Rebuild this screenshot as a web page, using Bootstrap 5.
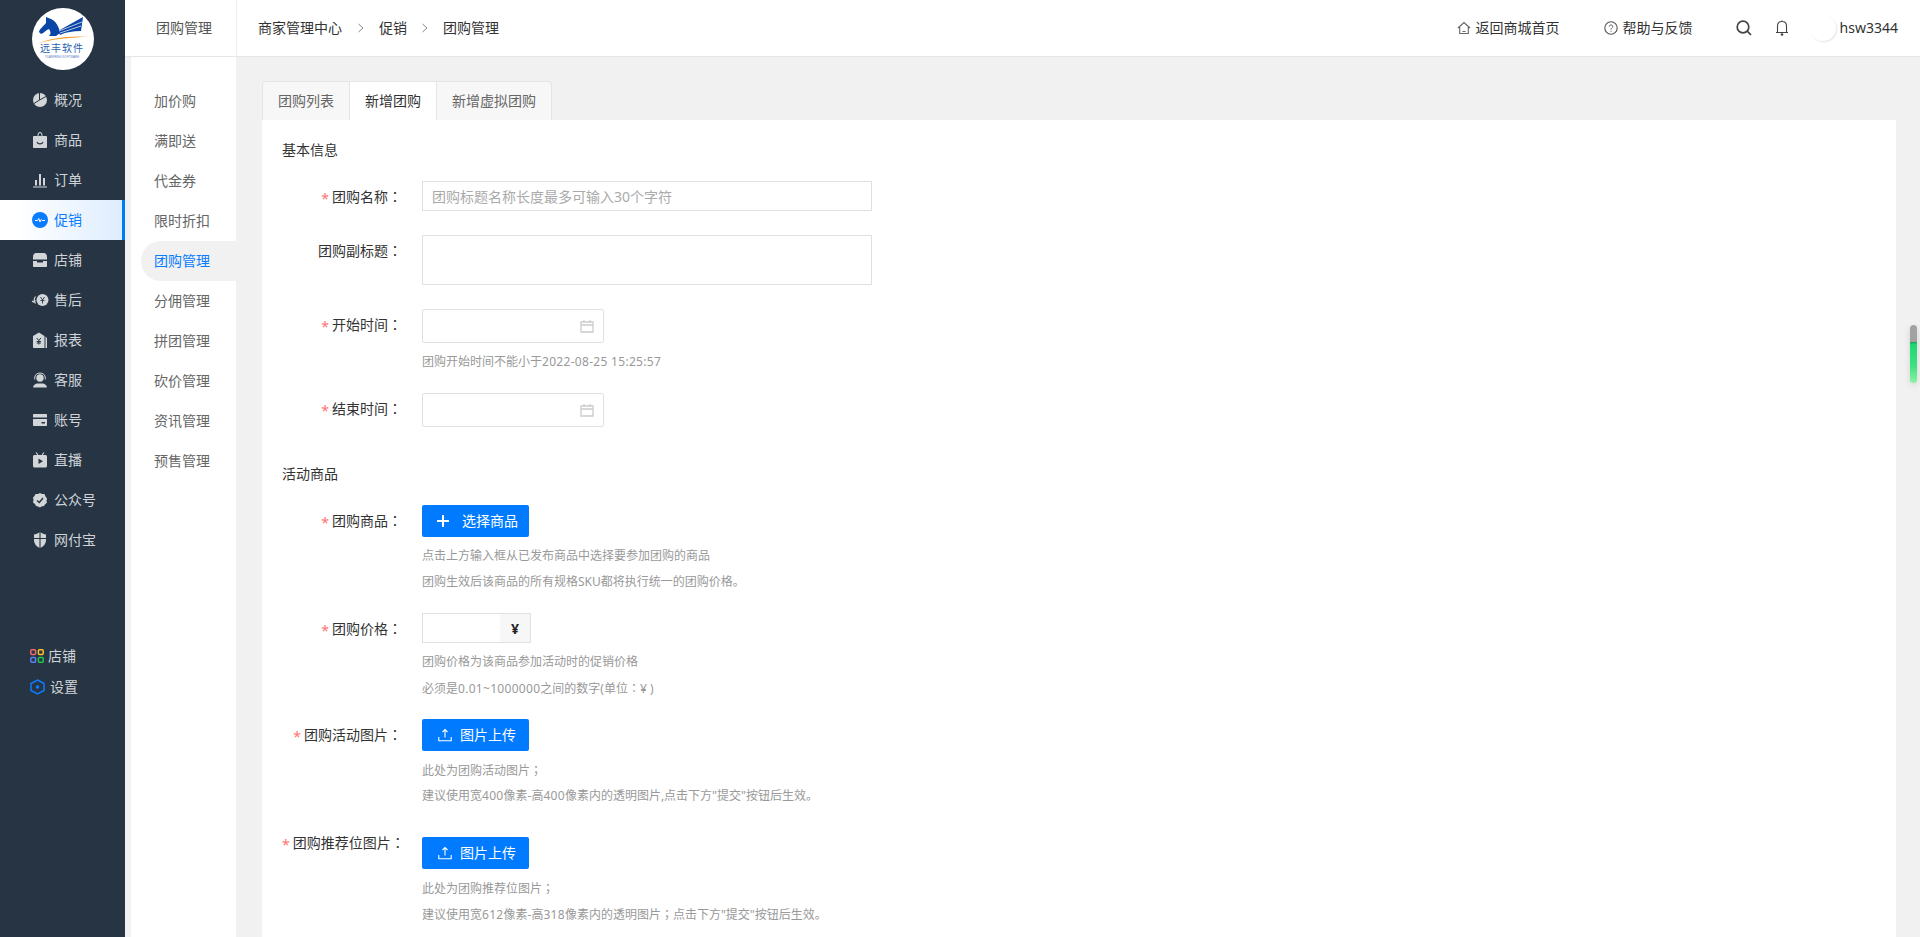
<!DOCTYPE html>
<html lang="zh-CN">
<head>
<meta charset="utf-8">
<title>团购管理</title>
<link rel="stylesheet" href="https://cdn.jsdelivr.net/npm/bootstrap@5.3.0/dist/css/bootstrap.min.css">
<style>
html,body{height:100%;overflow:hidden}
body{font-family:"Noto Sans","Noto Sans CJK SC",sans-serif;font-size:14px;color:#333;background:#f1f1f1;line-height:20px}
.shell{height:937px}
.side{width:125px;background:#263443;color:#cfd3d8;flex:none}
.logo-wrap{height:80px;padding:8px 0 0 32px}
.side-item{height:40px;padding-left:33px;gap:7px;color:#cfd3d8;text-decoration:none}
.side-item svg{width:14px;height:16px;flex:none;overflow:visible}
.side-item.on{background:linear-gradient(90deg,#fff 0,#fff 15%,#deedff 100%);border-right:3px solid #007bff;color:#0a7cff}
.side-item.on svg{width:16px;height:16px;margin-left:-1px;margin-right:-1px}
.side-bottom{margin-top:80px;padding-left:30px}
.side-foot{height:31px;gap:4px;color:#cfd3d8;text-decoration:none}
.side-foot svg{width:14px;height:14px;flex:none}
.side-foot.second svg{width:15px;height:16px}
.side-foot.second{gap:5px}
.right-area{min-width:0}
.topbar{height:57px;background:#fff;border-bottom:1px solid #e6e6e6}
.top-title{width:112px;border-right:1px solid #eee;padding-left:31px;line-height:56px;color:#555;flex:none}
.crumbs{padding-left:21px;color:#333}
.crumb-sep{width:10px;height:10px;margin:0 13px 0 14px;flex:none}
.crumb-sep.b{margin:0 13px 0 13px}
.top-link{color:#333;text-decoration:none;gap:5px}
.link-home{margin-right:44px}
.link-help{margin-right:43px}
.ic-search{margin-right:23px}
.ic-bell{margin-right:21px}
.avatar-dot{width:26px;height:26px;border-radius:50%;background:#fff;box-shadow:1px 1px 2px rgba(0,0,0,.1);margin-right:4px}
.user-name{padding-right:22px}
.body-row{height:880px}
.sub-gap{width:6px;flex:none}
.subnav{width:105px;background:#fff;padding-top:24px;flex:none}
.sub-item{height:40px;line-height:40px;padding-left:23px;margin-left:0;color:#666;text-decoration:none;display:block}
.sub-item.on{margin-left:10px;padding-left:13px;background:#f1f1f1;border-radius:20px 0 0 20px;color:#0a7cff}
.workspace{padding:24px 24px 0 26px;min-width:0}
.tabbar{border:0;height:39px;width:290px}
.tabbar .tab-cell{height:39px;line-height:38px;text-align:center;background:#f7f7f7;color:#666;border:1px solid #e5e5e5;border-bottom:0;border-left:0;margin:0;padding:0;border-radius:0;display:block;text-decoration:none}
.tabbar li:first-child .tab-cell{border-left:1px solid #e5e5e5;border-top-left-radius:4px}
.tabbar li:last-child .tab-cell{border-top-right-radius:4px}
.tabbar .tab-cell.active{background:#fff;color:#333}
.t1{width:88px}.t2{width:87px}.t3{width:115px}
.sheet{background:#fff;padding:20px 0 0 20px;height:818px;border:0}
.sect-title{color:#333;height:20px;line-height:20px}
.frow{display:flex}
.flabel{width:120px;height:30px;margin-right:20px;text-align:right;line-height:30px;flex:none;white-space:nowrap}
.req{color:#ff7373;margin-right:3px;vertical-align:-2px}
.fw-punct{font-family:"Noto Sans CJK TC",sans-serif}
.dg{letter-spacing:.3px}
.form-control.fld{border:1px solid #e0e0e0;border-radius:0;box-shadow:none;font-size:14px;color:#333;padding:0 9px;height:30px;line-height:28px;background:#fff}
.form-control.fld::placeholder{color:#aaa}
.w-name{width:450px}
.area{width:450px;height:50px!important;resize:none}
.datebox{width:182px;height:34px;border:1px solid #e0e0e0;border-radius:2px;background:#fff;padding-right:9px}
.datebox svg{width:14px;height:14px}
.hint{font-size:12px;height:26px;line-height:26px;color:#999;white-space:nowrap}
.hints-tight{margin-top:6px}
.pbtn{background:#007bff;border:0;border-radius:2px;height:32px;color:#fff;font-size:14px;padding:0;line-height:32px;gap:0}
.pbtn:hover{background:#007bff;color:#fff}
.btn-pick{width:107px;padding-left:15px}
.btn-pick svg{width:12px;height:12px;margin-right:13px}
.btn-up{width:107px;padding-left:16px}
.btn-up svg{width:14px;height:14px;margin-right:8px}
.price-group{width:110px;height:30px;flex-wrap:nowrap}
.price-group .fld{width:78px;flex:none;border-right:0;border-radius:0}
.price-group .yen{width:32px;justify-content:center;background:#f7f7f7;border:1px solid #e0e0e0;border-radius:0;padding:0;font-weight:700;color:#222;font-size:14px}
.mt-r1{margin-top:21px}
.mt-r2{margin-top:24px}
.mt-r3{margin-top:24px}
.mt-r4{margin-top:18px}
.mt-s2{margin-top:37px}
.mt-r5{margin-top:21px}
.mt-r6{margin-top:18px}
.mt-r7{margin-top:18px}
.mt-r8{margin-top:28px}
.lab-34{line-height:30px}
.lab-32{line-height:30px}
.lab-last{line-height:10px}
.hint-first{margin-top:6px}
.scroll-mark{position:fixed;left:1910px;top:325px;width:7px;height:58px;border-radius:4px;background:linear-gradient(#a2a2a2 0,#a2a2a2 29%,#1f9e5a 29%,#1fd873 34%,#3fe07f 70%,#8af3a3 100%);box-shadow:0 2px 6px rgba(0,0,0,.12)}
</style>
</head>
<body>
<div class="d-flex shell">
  <aside class="side d-flex flex-column">
    <div class="logo-wrap">
      <svg width="62" height="62" viewBox="0 0 62 62">
        <circle cx="31" cy="31" r="31" fill="#fff"/>
        <path fill="#0b45a8" d="M7 24C8 20 12 18 14 15L14 9L19 11C24 13 27 19 28 25L24 28L17 28C19 26 19 24 17 21C14 22 12 25 9 26Z"/>
        <path fill="#0b45a8" d="M26 23L51 9L49 23C41 23 34 24 28 27Z"/>
        <path stroke="#fff" stroke-width=".7" fill="none" d="M27 23L50 14M28 25L49 18"/>
        <path fill="#f39a1e" d="M4 36C18 30 40 27 57 29C40 29 20 31 4 36Z"/>
        <text x="30" y="44" text-anchor="middle" font-size="10" letter-spacing="1" fill="#2a5fb0" font-family="Noto Sans CJK SC, sans-serif">远丰软件</text>
        <text x="30" y="49.500" text-anchor="middle" font-size="3" fill="#5b82c2" font-family="Liberation Sans, sans-serif">YUANFENG SOFTWARE</text>
      </svg>
    </div>
    <nav class="d-flex flex-column">
      <a class="side-item d-flex align-items-center" href="#"><svg viewBox="0 0 14 16"><circle cx="7" cy="8" r="7" fill="#d3d6d9"/><path d="M6.500 .5V8L1 11.500M6.500 8L13 4.500" stroke="#263443" stroke-width="1" fill="none"/></svg>概况</a>
      <a class="side-item d-flex align-items-center" href="#"><svg viewBox="0 0 14 16"><path fill="#d3d6d9" d="M1 4H4.500C4.500 1 5.500 0 7 0S9.500 1 9.500 4H13C13.600 4 14 4.400 14 5V15C14 15.600 13.600 16 13 16H1C.4 16 0 15.600 0 15V5C0 4.400 .4 4 1 4ZM5.500 4H8.500C8.500 2 8 1 7 1S5.500 2 5.500 4Z"/><path d="M4 10C5 12.500 9 12.500 10 10" stroke="#263443" stroke-width="1.200" fill="none"/></svg>商品</a>
      <a class="side-item d-flex align-items-center" href="#"><svg viewBox="0 0 14 16"><path fill="#d3d6d9" d="M0 14.500H14V15.500H0ZM2 8H4V13.500H2ZM6 2H8V13.500H6ZM10 6H12V13.500H10Z"/></svg>订单</a>
      <a class="side-item on d-flex align-items-center" href="#"><svg viewBox="0 0 16 16"><circle cx="8" cy="8" r="8" fill="#0a7cff"/><path d="M3 8.500H5.500L6.800 6.500L8 10L9.300 7.500L10.300 8.500H13" stroke="#fff" stroke-width="1" fill="none"/></svg>促销</a>
      <a class="side-item d-flex align-items-center" href="#"><svg viewBox="0 0 14 16"><path fill="#d3d6d9" d="M3 1H11C13 1 14 3 14 5V7.500H0V5C0 3 1 1 3 1ZM0 9H4V10.500H10V9H14V14C14 14.600 13.600 15 13 15H1C.4 15 0 14.600 0 14Z"/></svg>店铺</a>
      <a class="side-item d-flex align-items-center" href="#"><svg viewBox="0 0 14 16"><circle cx="9.500" cy="8" r="6" fill="#d3d6d9"/><path d="M7.500 5L9.500 8L11.500 5M9.500 8V11.500M7.500 8.500H11.500" stroke="#263443" stroke-width=".9" fill="none"/><path d="M2.500 4.500C1 6.500 1 9.500 2.500 11.500M2.500 8.500L.5 10L-1 9" stroke="#d3d6d9" stroke-width="1.200" fill="none"/></svg>售后</a>
      <a class="side-item d-flex align-items-center" href="#"><svg viewBox="0 0 14 16"><path fill="#d3d6d9" d="M6 .5L11.500 4V16H1C.4 16 0 15.600 0 15V4ZM12.500 4.500L14 6V16H12.500Z"/><path d="M3.700 6L5.800 8.500L7.900 6M5.800 8.500V12.500M3.700 9.500H7.900M3.700 11H7.900" stroke="#263443" stroke-width="1" fill="none"/></svg>报表</a>
      <a class="side-item d-flex align-items-center" href="#"><svg viewBox="0 0 14 16"><circle cx="7" cy="6" r="3.700" fill="#d3d6d9"/><path d="M1.700 7.500V6C1.700 2.800 4 1 7 1S12.300 2.800 12.300 6V7.500" stroke="#d3d6d9" stroke-width="1" fill="none"/><path fill="#d3d6d9" d="M0 15.500C.5 12.500 3 11.500 4 11.500H10C11 11.500 13.500 12.500 14 15.500Z"/></svg>客服</a>
      <a class="side-item d-flex align-items-center" href="#"><svg viewBox="0 0 14 16"><path fill="#d3d6d9" d="M1 2H13C13.600 2 14 2.400 14 3V5.500H0V3C0 2.400 .4 2 1 2ZM0 7H14V13C14 13.600 13.600 14 13 14H1C.4 14 0 13.600 0 13ZM8.500 10V11.500H12V10Z"/></svg>账号</a>
      <a class="side-item d-flex align-items-center" href="#"><svg viewBox="0 0 14 16"><path fill="#d3d6d9" d="M1.500 3H12.500C13.400 3 14 3.600 14 4.500V14C14 14.900 13.400 15.500 12.500 15.500H1.500C.6 15.500 0 14.900 0 14V4.500C0 3.600 .6 3 1.500 3Z"/><path d="M3 .5L5 3M11 .5L9 3" stroke="#d3d6d9" stroke-width="1.200"/><path fill="#263443" d="M5.500 6.500L10 9.250L5.500 12Z"/></svg>直播</a>
      <a class="side-item d-flex align-items-center" href="#"><svg viewBox="0 0 14 16"><path fill="#d3d6d9" d="M7 1L9 2L11.500 2L12.500 4.500L14 6.500L13.500 9L14 10.500L12 12.500L11 14L8.500 14.500L7 15.500L5 14.500L3 14L2 12L0 10.500L.5 8L0 5.500L1.500 4L2.500 2L5 2Z"/><path d="M4 8.500L6.300 10.500L10 6" stroke="#263443" stroke-width="1.500" fill="none"/></svg>公众号</a>
      <a class="side-item d-flex align-items-center" href="#"><svg viewBox="0 0 14 16"><path fill="#d3d6d9" d="M7 0C9 1.500 11.500 2.500 13 2.500V8C13 12 10 15 7 16C4 15 1 12 1 8V2.500C2.500 2.500 5 1.500 7 0Z"/><path d="M7 0V16M1 6.500H13" stroke="#263443" stroke-width="1.100"/></svg>网付宝</a>
    </nav>
    <div class="side-bottom d-flex flex-column">
      <a class="side-foot d-flex align-items-center" href="#"><svg viewBox="0 0 14 14" fill="none" stroke-width="1.500"><rect x=".8" y=".8" width="4.800" height="4.800" rx="1" stroke="#ee6a6f"/><rect x="8.400" y=".8" width="4.800" height="4.800" rx="1" stroke="#f7c325"/><rect x=".8" y="8.400" width="4.800" height="4.800" rx="1" stroke="#5a82f0"/><rect x="8.400" y="8.400" width="4.800" height="4.800" rx="1" stroke="#27c24c"/></svg>店铺</a>
      <a class="side-foot second d-flex align-items-center" href="#"><svg viewBox="0 0 15 16"><path d="M7.500 1L14 4.500V11.500L7.500 15L1 11.500V4.500Z" fill="none" stroke="#0a7cff" stroke-width="1.500"/><circle cx="7.500" cy="8" r="1.800" fill="#0a7cff"/></svg>设置</a>
    </div>
  </aside>

  <div class="right-area flex-grow-1 d-flex flex-column">
    <header class="topbar d-flex align-items-center">
      <div class="top-title">团购管理</div>
      <div class="crumbs d-flex align-items-center">
        <span>商家管理中心</span>
        <svg class="crumb-sep" viewBox="0 0 10 10"><path d="M2.500 1L7 5L2.500 9" fill="none" stroke="#888" stroke-width="1"/></svg>
        <span>促销</span>
        <svg class="crumb-sep b" viewBox="0 0 10 10"><path d="M2.500 1L7 5L2.500 9" fill="none" stroke="#888" stroke-width="1"/></svg>
        <span>团购管理</span>
      </div>
      <div class="ms-auto d-flex align-items-center">
        <a href="#" class="top-link link-home d-flex align-items-center"><svg width="14" height="14" viewBox="0 0 14 14"><path d="M1 7L7 1.500L13 7M2.700 5.500V12.500H11.300V5.500M5.500 10.500H8.500" fill="none" stroke="#666" stroke-width="1.100"/></svg>返回商城首页</a>
        <a href="#" class="top-link link-help d-flex align-items-center"><svg width="14" height="14" viewBox="0 0 14 14"><circle cx="7" cy="7" r="6.200" fill="none" stroke="#555" stroke-width="1.100"/><path d="M5.200 5.500C5.300 3.500 8.800 3.500 8.800 5.500C8.800 6.800 7 6.800 7 8.500M7 9.700V10.700" fill="none" stroke="#555" stroke-width="1"/></svg>帮助与反馈</a>
        <svg class="ic-search" width="16" height="16" viewBox="0 0 16 16"><circle cx="7" cy="7" r="5.800" fill="none" stroke="#444" stroke-width="1.700"/><path d="M11.200 11.200L15 15" stroke="#444" stroke-width="1.700"/></svg>
        <svg class="ic-bell" width="14" height="16" viewBox="0 0 14 16"><path d="M2.500 12.500V6C2.500 3 4 1.500 7 1.500S11.500 3 11.500 6V12.500ZM1 12.500H13M7 .5V1.500" fill="none" stroke="#444" stroke-width="1.100"/><circle cx="7" cy="14.500" r="1.300" fill="#444"/></svg>
        <span class="avatar-dot"></span>
        <span class="user-name">hsw3344</span>
      </div>
    </header>
    <div class="body-row d-flex">
      <div class="sub-gap"></div>
      <nav class="subnav">
        <a class="sub-item" href="#">加价购</a>
        <a class="sub-item" href="#">满即送</a>
        <a class="sub-item" href="#">代金券</a>
        <a class="sub-item" href="#">限时折扣</a>
        <a class="sub-item on" href="#">团购管理</a>
        <a class="sub-item" href="#">分佣管理</a>
        <a class="sub-item" href="#">拼团管理</a>
        <a class="sub-item" href="#">砍价管理</a>
        <a class="sub-item" href="#">资讯管理</a>
        <a class="sub-item" href="#">预售管理</a>
      </nav>
      <main class="workspace flex-grow-1">
        <ul class="nav tabbar">
          <li class="t1"><a class="tab-cell" href="#">团购列表</a></li>
          <li class="t2"><a class="tab-cell active" href="#">新增团购</a></li>
          <li class="t3"><a class="tab-cell" href="#">新增虚拟团购</a></li>
        </ul>
        <form class="sheet">
          <div class="sect-title">基本信息</div>
          <div class="frow mt-r1">
            <div class="flabel"><span class="req">*</span>团购名称<span class="fw-punct" lang="zh-TW">：</span></div>
            <input class="form-control fld w-name" placeholder="团购标题名称长度最多可输入30个字符">
          </div>
          <div class="frow mt-r2">
            <div class="flabel">团购副标题<span class="fw-punct" lang="zh-TW">：</span></div>
            <textarea class="form-control fld area"></textarea>
          </div>
          <div class="frow mt-r3">
            <div class="flabel lab-34"><span class="req">*</span>开始时间<span class="fw-punct" lang="zh-TW">：</span></div>
            <div>
              <div class="datebox d-flex align-items-center justify-content-end"><svg viewBox="0 0 14 14"><path d="M1 3H13V13H1ZM1 6H13M4 1V3M10 1V3" fill="none" stroke="#ccc" stroke-width="1.300"/></svg></div>
              <div class="hint hint-first">团购开始时间不能小于<span class="dg">2022-08-25 15:25:57</span></div>
            </div>
          </div>
          <div class="frow mt-r4">
            <div class="flabel lab-34"><span class="req">*</span>结束时间<span class="fw-punct" lang="zh-TW">：</span></div>
            <div class="datebox d-flex align-items-center justify-content-end"><svg viewBox="0 0 14 14"><path d="M1 3H13V13H1ZM1 6H13M4 1V3M10 1V3" fill="none" stroke="#ccc" stroke-width="1.300"/></svg></div>
          </div>
          <div class="sect-title mt-s2">活动商品</div>
          <div class="frow mt-r5">
            <div class="flabel lab-32"><span class="req">*</span>团购商品<span class="fw-punct" lang="zh-TW">：</span></div>
            <div>
              <button type="button" class="btn pbtn btn-pick d-flex align-items-center"><svg viewBox="0 0 12 12"><path d="M6 0V12M0 6H12" stroke="#fff" stroke-width="2"/></svg>选择商品</button>
              <div class="hints-tight">
                <div class="hint">点击上方输入框从已发布商品中选择要参加团购的商品</div>
                <div class="hint">团购生效后该商品的所有规格SKU都将执行统一的团购价格。</div>
              </div>
            </div>
          </div>
          <div class="frow mt-r6">
            <div class="flabel"><span class="req">*</span>团购价格<span class="fw-punct" lang="zh-TW">：</span></div>
            <div>
              <div class="input-group price-group">
                <input class="form-control fld">
                <span class="input-group-text yen">¥</span>
              </div>
              <div class="hints-tight">
                <div class="hint">团购价格为该商品参加活动时的促销价格</div>
                <div class="hint">必须是<span class="dg">0.01~1000000</span>之间的数字(单位<span class="fw-punct" lang="zh-TW">：</span>¥ )</div>
              </div>
            </div>
          </div>
          <div class="frow mt-r7">
            <div class="flabel lab-32"><span class="req">*</span>团购活动图片<span class="fw-punct" lang="zh-TW">：</span></div>
            <div>
              <button type="button" class="btn pbtn btn-up d-flex align-items-center"><svg viewBox="0 0 14 14"><path d="M7 9.500V2M4.500 4L7 1.500L9.500 4M.8 9V12.800H13.200V9" fill="none" stroke="#fff" stroke-width="1.100"/></svg>图片上传</button>
              <div class="hints-tight">
                <div class="hint">此处为团购活动图片<span class="fw-punct" lang="zh-TW">；</span></div>
                <div class="hint">建议使用宽<span class="dg">400</span>像素-高<span class="dg">400</span>像素内的透明图片,点击下方"提交"按钮后生效。</div>
              </div>
            </div>
          </div>
          <div class="frow mt-r8">
            <div class="flabel lab-last"><span class="req">*</span>团购推荐位图片<span class="fw-punct" lang="zh-TW">：</span></div>
            <div>
              <button type="button" class="btn pbtn btn-up d-flex align-items-center"><svg viewBox="0 0 14 14"><path d="M7 9.500V2M4.500 4L7 1.500L9.500 4M.8 9V12.800H13.200V9" fill="none" stroke="#fff" stroke-width="1.100"/></svg>图片上传</button>
              <div class="hints-tight">
                <div class="hint">此处为团购推荐位图片<span class="fw-punct" lang="zh-TW">；</span></div>
                <div class="hint">建议使用宽<span class="dg">612</span>像素-高<span class="dg">318</span>像素内的透明图片<span class="fw-punct" lang="zh-TW">；</span>点击下方"提交"按钮后生效。</div>
              </div>
            </div>
          </div>
        </form>
      </main>
    </div>
  </div>
</div>
<div class="scroll-mark"></div>
<script src="https://cdn.jsdelivr.net/npm/bootstrap@5.3.0/dist/js/bootstrap.bundle.min.js"></script>
</body>
</html>
